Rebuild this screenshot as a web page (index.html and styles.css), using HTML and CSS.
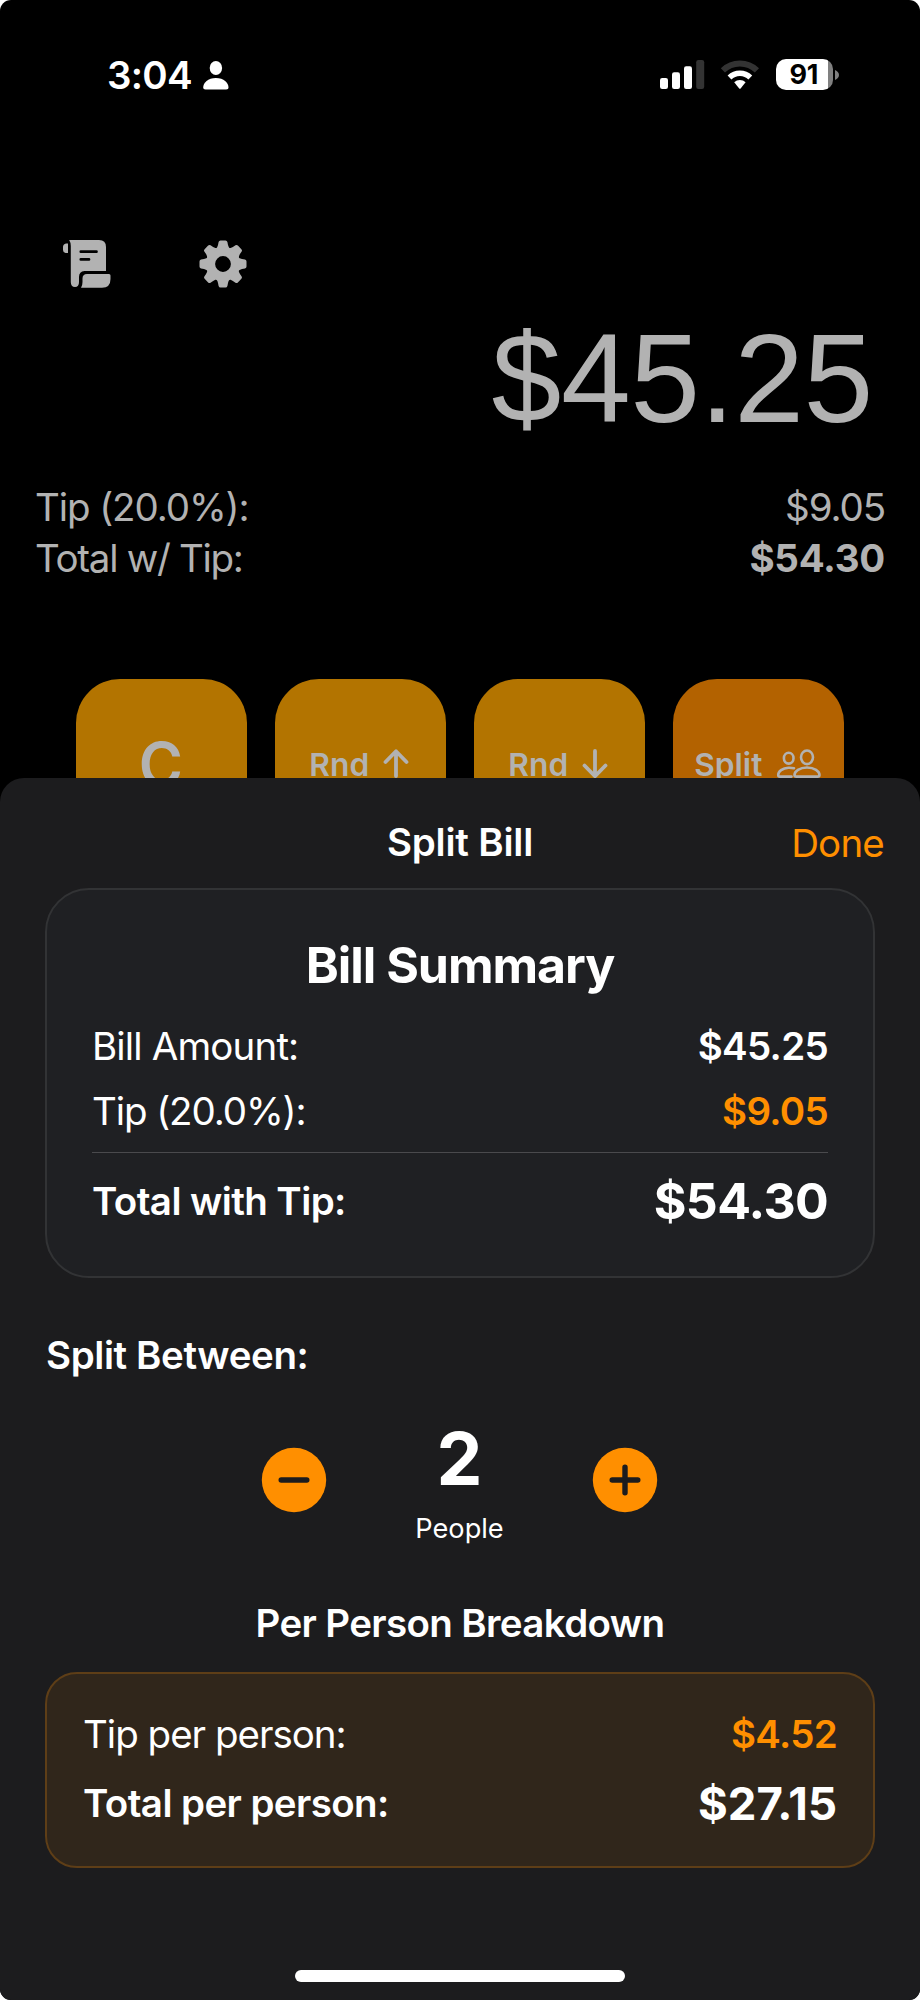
FILE: index.html
```html
<!DOCTYPE html>
<html lang="en">
<head>
<meta charset="utf-8">
<title>Split Bill</title>
<link rel="stylesheet" href="styles.css">
</head>
<body>
<div class="phone">
  <header class="status">
    <div class="status-left">
      <span class="time">3:04</span>
      <svg class="person" width="26" height="29" viewBox="0 0 26 29" fill="#fff"><ellipse cx="12.9" cy="7" rx="6.2" ry="6.9"/><path d="M2.5 28.5C1 28.5.2 27.700.2 26.500.2 22 5 17 12.900 17 20.800 17 25.500 22 25.500 26.500 25.500 27.700 24.700 28.500 23.200 28.500Z"/></svg>
    </div>
    <div class="status-right">
      <svg class="signal" width="45" height="30" viewBox="0 0 45 30" fill="#fff"><rect x="0" y="18" width="8" height="11" rx="2.200"/><rect x="12" y="12.200" width="8" height="16.800" rx="2.200"/><rect x="24" y="6.200" width="8" height="22.800" rx="2.200"/><rect x="36.200" y="0" width="8" height="29" rx="2.200" fill="#333"/></svg>
      <svg class="wifi" width="40" height="30" viewBox="0 0 40 30" fill="none"><path d="M2.880 10.400A24.500 24.500 0 0 1 36.920 10.400" stroke="#333" stroke-width="6"/><path d="M9.500 17.500A14.700 14.700 0 0 1 30.300 17.500" stroke="#fff" stroke-width="5.400"/><path d="M14.200 22.300A8.300 8.300 0 0 1 25.600 22.300L20.800 28.200Q19.900 29.200 19 28.200Z" fill="#fff"/></svg>
      <div class="battery"><span>91</span></div>
      <svg class="battery-tip" width="4" height="12" viewBox="0 0 4 12"><path d="M0 1Q4 3 4 6T0 11Z" fill="#808080"/></svg>
    </div>
  </header>

  <main class="calc">
    <nav class="tools">
      <svg width="48" height="48" viewBox="0 0 48 48" fill="#b2b2b2"><path d="M5 3.500V13H2.500Q0 12.500 0 10V7Q0 4 3 3.500Z"/><path d="M6.200 0H36Q43 0 43 7V31H21.500Q16 31.500 16 37V42Q16 47 12 47 7.800 47 7.800 42V6Q7.800 2.500 6.200 0Z"/><path d="M24 34H46Q47.500 34 47.500 35.500V39Q47.500 47.700 39 47.700H18Q19.500 45.500 19.500 42V38.500Q19.500 34 24 34Z"/><path d="M17.800 11.700H33.500M17.800 19.400H26" stroke="#000" stroke-width="2.700" stroke-linecap="round"/></svg>
      <svg width="48" height="48" viewBox="-24 -24 48 48" fill="#b2b2b2"><defs><path id="tooth" d="M-7.500-14.500Q-5.500-16.500-5-19L-4.400-22Q-4-23.500-2.500-23.500H2.500Q4-23.500 4.400-22L5-19Q5.500-16.500 7.500-14.500Z"/></defs><circle r="12.300" fill="none" stroke="#b2b2b2" stroke-width="8.800"/><use href="#tooth"/><use href="#tooth" transform="rotate(45)"/><use href="#tooth" transform="rotate(90)"/><use href="#tooth" transform="rotate(135)"/><use href="#tooth" transform="rotate(180)"/><use href="#tooth" transform="rotate(225)"/><use href="#tooth" transform="rotate(270)"/><use href="#tooth" transform="rotate(315)"/></svg>
    </nav>
    <div class="display">$45.25</div>
    <div class="calc-row"><span>Tip (20.0%):</span><span>$9.05</span></div>
    <div class="calc-row"><span class="calc-total">Total w/ Tip:</span><b>$54.30</b></div>
    <div class="keys">
      <div class="key key-clear">C</div>
      <div class="key key-round"><span>Rnd</span><svg width="26" height="30" viewBox="0 0 26 30"><path d="M13 27V2.500M2.500 13 13 2.200 23.500 13"/></svg></div>
      <div class="key key-round"><span>Rnd</span><svg width="26" height="30" viewBox="0 0 26 30"><path d="M13 2V27M2.500 16.500 13 27.300 23.500 16.500"/></svg></div>
      <div class="key key-split"><span>Split</span><svg class="people" width="46" height="31" viewBox="0 0 46 31"><ellipse cx="12.700" cy="9.200" rx="4.800" ry="5.400"/><ellipse cx="31" cy="8.300" rx="6" ry="6.800"/><path d="M18 19.200Q15.500 18.600 12.500 18.700C6.500 19 2.200 22.500 2.200 26Q2.200 27.600 4 27.600H15.500M31 18.500C23.500 18.500 18.500 22.500 18.500 26Q18.500 27.600 20.500 27.600H41.500Q43.500 27.600 43.500 26C43.500 22.500 38.500 18.500 31 18.500Z"/></svg></div>
    </div>
  </main>

  <section class="sheet">
    <div class="sheet-head"><span></span><h1>Split Bill</h1><a class="done">Done</a></div>
    <div class="card summary">
      <h2>Bill Summary</h2>
      <div class="row"><span class="label-bill">Bill Amount:</span><span class="amount">$45.25</span></div>
      <div class="row"><span class="label">Tip (20.0%):</span><span class="amount orange">$9.05</span></div>
      <div class="row total"><span class="strong">Total with Tip:</span><span class="big">$54.30</span></div>
    </div>
    <h3 class="between">Split Between:</h3>
    <div class="stepper">
      <svg width="66" height="66" viewBox="-33 -33 66 66"><circle r="32.200"/><path d="M-12.800 0H12.800"/></svg>
      <div class="count"><span class="num">2</span><span class="unit">People</span></div>
      <svg width="66" height="66" viewBox="-33 -33 66 66"><circle r="32.200"/><path d="M-12.800 0H12.800M0-12.800V12.800"/></svg>
    </div>
    <h3 class="breakdown">Per Person Breakdown</h3>
    <div class="card person-card">
      <div class="row"><span class="label-tip">Tip per person:</span><span class="amount orange">$4.52</span></div>
      <div class="row"><span class="strong">Total per person:</span><span class="mid">$27.15</span></div>
    </div>
    <div class="home"></div>
  </section>
</div>
</body>
</html>
```
FILE: styles.css
```css
* { box-sizing: border-box; }
body { margin: 0; background: #fff; font-family: Inter, "Liberation Sans", sans-serif; font-size: 38.5px; }
h1, h2, h3 { margin: 0; }
svg { display: block; flex: none; }
.phone { position: relative; width: 920px; height: 2000px; overflow: hidden; border-radius: 11px; background: #000; }

.status { height: 150px; padding: 50px 81px 0 107px; display: flex; justify-content: space-between; }
.status-left, .status-right { display: flex; height: 50px; align-items: center; }
.status-right { height: 49px; }
.time { color: #fff; font-weight: 600; letter-spacing: -0.7px; }
.person { margin-left: 11px; }
.wifi { margin-left: 15px; }
.battery { margin-left: 16px; width: 57px; height: 31.500px; border-radius: 10px; background: linear-gradient(90deg, #fff 52px, #808080 52px); display: flex; align-items: center; padding-left: 13.500px; font-size: 27px; font-weight: 700; letter-spacing: -0.3px; }
.battery-tip { margin-left: 2px; }

.calc { color: #b2b2b2; }
.tools { display: flex; gap: 88.500px; padding: 90px 0 0 62.500px; height: 168px; }
.display { height: 122px; line-height: 122px; margin-right: 47px; text-align: right; font-family: "Liberation Sans", sans-serif; font-size: 125.500px; letter-spacing: -0.4px; }
.calc-row { display: flex; justify-content: space-between; height: 51.300px; line-height: 51.300px; padding: 0 35px; letter-spacing: -1.1px; }
.calc-total { letter-spacing: -1.3px; }
.calc-row b { letter-spacing: -0.3px; }
.display + .calc-row { margin-top: 42px; }
.keys { display: flex; gap: 27.500px; margin: 94px 0 0 75.500px; }
.key { width: 171.500px; height: 171.500px; border-radius: 44px; background: #b37400; display: flex; align-items: center; justify-content: center; gap: 14px; font-size: 31.700px; font-weight: 600; }
.key svg path, .key svg ellipse { fill: none; stroke: #b2b2b2; stroke-width: 3.800; stroke-linecap: round; stroke-linejoin: round; }
.key .people path, .key .people ellipse { stroke-width: 2.600; }
.key-round { padding-right: 2px; }
.key-clear { font-size: 60px; padding-right: 1px; }
.key-split { background: #b36200; }

.sheet { position: absolute; left: 0; top: 778px; width: 920px; height: 1222px; border-radius: 24px 24px 0 0; background: #1c1c1e; color: #fff; }
.sheet-head { display: grid; grid-template-columns: 1fr auto 1fr; align-items: center; height: 110px; padding: 19px 36px 0; line-height: 50px; }
h1, h3 { font-size: 38.500px; font-weight: 600; line-height: 50px; }
h1 { letter-spacing: -0.2px; padding-bottom: 2px; }
.done { color: #ff8f00; text-align: right; letter-spacing: -0.8px; }
.card { margin: 0 45px; border: 2px solid #323335; border-radius: 44px; background: #1f2023; }
.row { display: flex; justify-content: space-between; line-height: 64.500px; height: 64.500px; }
.summary { height: 390px; padding: 45px 45px 0; }
h2 { font-size: 50px; line-height: 60px; font-weight: 700; text-align: center; margin-bottom: 19px; letter-spacing: -1.050px; }
.label { letter-spacing: -1.100px; }
.label-bill { letter-spacing: -0.850px; }
.label-tip { letter-spacing: -1px; }
.amount { font-weight: 600; letter-spacing: -0.700px; }
.strong { font-weight: 600; letter-spacing: -0.590px; }
.orange { color: #ff8f00; }
.total { border-top: 1px solid #4a4a4d; margin-top: 9px; height: 98px; line-height: 96.500px; }
.big { font-size: 50px; font-weight: 700; letter-spacing: -0.700px; }
.mid { font-size: 45.500px; font-weight: 700; }
.between { margin: 52px 0 0 46px; letter-spacing: -0.400px; }
.stepper { display: flex; justify-content: center; align-items: flex-start; gap: 75px; height: 140px; margin-top: 34px; padding-right: 1px; }
.stepper svg { margin-top: 33px; }
.stepper circle { fill: #ff8f00; }
.stepper path { stroke: #1c1c1e; stroke-width: 5.400; stroke-linecap: round; }
.count { width: 115px; display: flex; flex-direction: column; align-items: center; }
.num { font-size: 73px; font-weight: 700; line-height: 90px; }
.unit { font-size: 27.200px; line-height: 50px; }
.breakdown { margin-top: 43.500px; text-align: center; letter-spacing: -0.640px; }
.person-card { margin-top: 24.500px; height: 196px; border-color: #5e3e17; border-radius: 32px; background: #30261b; padding: 26px 36px 0; }
.person-card .row { height: 69px; line-height: 69px; }
.home { margin: 102px auto 0; width: 330px; height: 11.500px; border-radius: 6px; background: #fff; }
```
